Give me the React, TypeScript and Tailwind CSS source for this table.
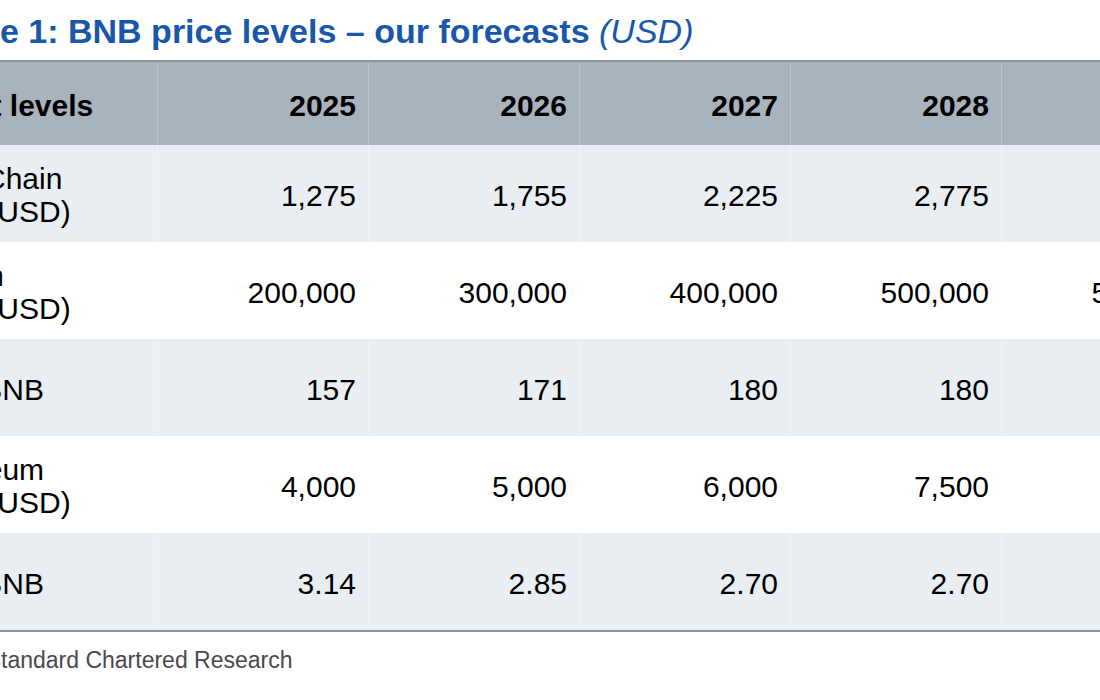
const years = ["2025", "2026", "2027", "2028", "2029"];

const rows: { label: string[]; values: string[]; shaded: boolean }[] = [
  { label: ["BNB Chain", "price (USD)"], values: ["1,275", "1,755", "2,225", "2,775", "3,375"], shaded: true },
  { label: ["Bitcoin", "price (USD)"], values: ["200,000", "300,000", "400,000", "500,000", "550,000"], shaded: false },
  { label: ["BTC/BNB"], values: ["157", "171", "180", "180", "163"], shaded: true },
  { label: ["Ethereum", "price (USD)"], values: ["4,000", "5,000", "6,000", "7,500", "8,500"], shaded: false },
  { label: ["ETH/BNB"], values: ["3.14", "2.85", "2.70", "2.70", "2.52"], shaded: true },
];

export default function App() {
  return (
    <div className="w-[1100px] h-[700px] overflow-hidden bg-white font-['Liberation_Sans',Arial,sans-serif] text-black">
      <div className="ml-[-100px] w-[1400px]">
        {/* Title */}
        <h1 className="pl-[15px] pt-[12px] mb-[10px] text-[34px] leading-[38px] font-bold text-[#1857a9] whitespace-nowrap">
          Figure 1: BNB price levels – our forecasts{" "}
          <span className="font-normal italic">(USD)</span>
        </h1>

        {/* Table */}
        <div className="w-[1313px] border-t-2 border-b-2 border-[#8c949c]">
          <div className="grid grid-cols-[258px_repeat(5,211px)] h-[83px] bg-[#a9b3bd] text-[30px] leading-[33px] font-bold">
            <div className="flex items-center pl-[12px] pt-[3px] border-r border-[#bac2ca] whitespace-nowrap">
              Target levels
            </div>
            {years.map((y) => (
              <div
                key={y}
                className="flex items-center justify-end pr-[12px] pt-[3px] border-r border-[#bac2ca]"
              >
                {y}
              </div>
            ))}
          </div>

          {rows.map((r, i) => (
            <div
              key={i}
              className={
                "grid grid-cols-[258px_repeat(5,211px)] h-[97px] text-[30px] leading-[33px] " +
                (r.shaded ? "bg-[#e9eef3]" : "bg-white")
              }
            >
              <div className="flex flex-col justify-center pl-[14px] pt-[3px] border-r border-white/30 whitespace-nowrap">
                {r.label.map((l) => (
                  <span key={l}>{l}</span>
                ))}
              </div>
              {r.values.map((v, j) => (
                <div
                  key={j}
                  className="flex items-center justify-end pr-[12px] pt-[4px] border-r border-white/30"
                >
                  {v}
                </div>
              ))}
            </div>
          ))}
        </div>

        {/* Source */}
        <p className="mt-[14px] text-[23px] leading-[28px] text-[#4a4a4a] whitespace-nowrap">
          Source: Standard Chartered Research
        </p>
      </div>
    </div>
  );
}
